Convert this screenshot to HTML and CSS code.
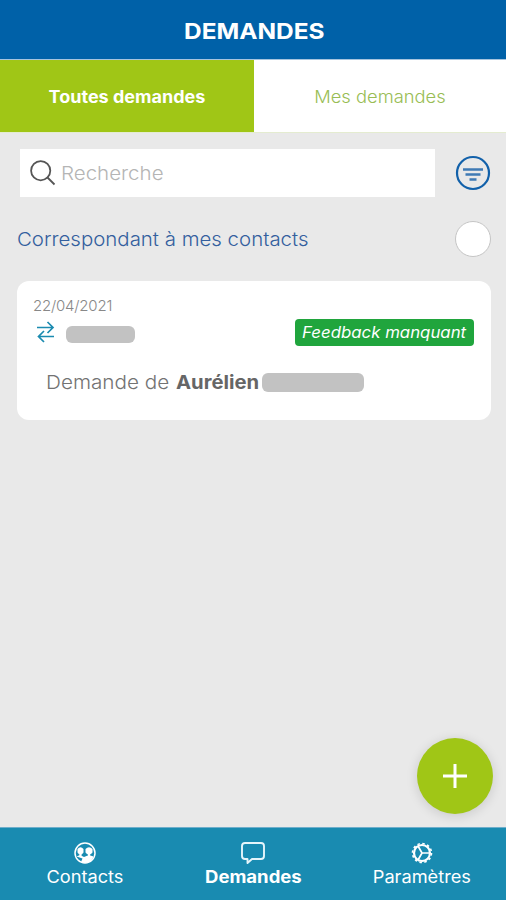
FILE: index.html
```html
<!DOCTYPE html>
<html lang="fr">
<head>
<meta charset="utf-8">
<meta name="viewport" content="width=device-width, initial-scale=1">
<title>Demandes</title>
<link rel="stylesheet" href="styles.css">
</head>
<body>
<div class="app">
  <header class="header"><h1 class="title">DEMANDES</h1></header>
  <nav class="tabs">
    <a class="tab tab-active"><span class="t-all">Toutes demandes</span></a>
    <a class="tab"><span class="t-mine">Mes demandes</span></a>
  </nav>
  <main class="content">
    <div class="search-row">
      <div class="search">
        <svg class="search-icon" width="26" height="26" viewBox="0 0 26 26" fill="none" stroke="#555" stroke-width="1.8"><circle cx="10.700" cy="10.700" r="9.600"/><path d="M17.500 17.500 24.500 24.500"/></svg>
        <span class="placeholder">Recherche</span>
      </div>
      <svg class="filter" width="36" height="36" viewBox="0 0 36 36" fill="none" stroke="#1261aa"><circle cx="18" cy="18" r="16" stroke-width="2.200"/><path d="M8 14.500h20M10.500 19.500h15M14.500 24.500h7" stroke="#3f7ab4" stroke-width="2.500"/></svg>
    </div>
    <div class="match-row">
      <span class="match">Correspondant à mes contacts</span>
      <span class="radio"></span>
    </div>
    <article class="card">
      <div class="date">22/04/2021</div>
      <div class="status-row">
        <svg class="swap" width="18" height="22" viewBox="0 0 18 22" fill="none" stroke="#1b8bb0" stroke-width="1.700"><path d="M0 6.500h16M10.500 1l5.500 5.500-5.500 5.500M17 15.500H1M7 10l-5.500 5.500L7 21"/></svg>
        <span class="mask mask-short"></span>
        <span class="badge"><span class="badge-text">Feedback manquant</span></span>
      </div>
      <div class="request"><span class="req-label">Demande de</span><strong class="req-name">Aurélien</strong><span class="mask mask-long"></span></div>
    </article>
  </main>
  <button class="fab" aria-label="Ajouter"><svg width="24" height="24" viewBox="0 0 24 24" stroke="#fff" stroke-width="3"><path d="M12 0v24M0 12h24"/></svg></button>
  <nav class="bottom">
    <a class="item">
      <svg width="22" height="22" viewBox="0 0 22 22"><circle cx="11" cy="11" r="10" fill="none" stroke="#fff" stroke-width="1.500"/><path d="M2.500 14.500 6 13l4 2 5-2 4.500 1.500Q17.500 20.500 11 21q-3 0-4-1l1.500-3.500Z" fill="#fff"/><path d="M3.500 7Q6.500 3.500 9.500 7v3.500q-3 4.500-6 0ZM11.500 7q3.500-3.500 7 0v3.500q-3.500 4.500-7 0Z" fill="#fff"/><path d="M6.500 12v3M15 12v3" stroke="#fff" stroke-width="2"/></svg>
      <span class="i-contacts">Contacts</span>
    </a>
    <a class="item">
      <svg width="24" height="22" viewBox="0 0 24 22" fill="none" stroke="#e5f5fb" stroke-width="1.900" stroke-linejoin="round"><path d="M4 1h16q3 0 3 3v10q0 3-3 3h-9l-4.500 4v-4H4q-3 0-3-3V4q0-3 3-3Z"/></svg>
      <span class="i-demandes">Demandes</span>
    </a>
    <a class="item">
      <svg width="22" height="22" viewBox="0 0 22 22" fill="none" stroke="#fff"><circle cx="11" cy="11" r="8" stroke-width="2.200"/><circle cx="11" cy="11" r="9.500" stroke-width="1.600" stroke-dasharray="2.500 2.474"/><path d="M11 11h8M11 11 7 4M11 11 7 18" stroke-width="1.700"/></svg>
      <span class="i-params">Paramètres</span>
    </a>
  </nav>
</div>
</body>
</html>
```
FILE: styles.css
```css
* { box-sizing: border-box; }
body { margin: 0; font-family: Inter, "Open Sans", sans-serif; }
.app { position: relative; width: 506px; height: 900px; display: flex; flex-direction: column; background: #e9e9e9; overflow: hidden; }
.app span, .app strong, .title { white-space: nowrap; }
.header { height: 59px; display: flex; align-items: center; justify-content: center; background: #0061a8; padding: 3px 0 0 2px; }
.title { margin: 0; font-size: 22px; line-height: 28px; font-weight: 650; color: #fff; transform: scaleX(1.11); }
.tabs { display: flex; height: 74px; background: #fff; border-top: 1px solid #a6c4de; border-bottom: 1px solid #e4ecd0; }
.tab { flex: 1; display: flex; align-items: center; justify-content: center; font-size: 17px; font-weight: 300; color: #99bd55; padding-top: 2px; }
.tab-active { background: #a0c616; color: #fff; font-weight: 700; flex: 0 0 254px; }
.t-all { transform: scaleX(1.06); }
.t-mine { transform: scaleX(1.08); }
.content { flex: 1; padding: 16px 15px 0 17px; }
.search-row { display: flex; justify-content: space-between; align-items: center; height: 48px; padding-left: 3px; }
.search { width: 415px; height: 48px; background: #fff; display: flex; align-items: center; padding-left: 10px; }
.placeholder { margin-left: 5px; font-size: 19px; font-weight: 300; color: #b5b5b5; transform: scaleX(1.08); transform-origin: left; }
.match-row { display: flex; align-items: center; justify-content: space-between; height: 36px; margin-top: 24px; }
.match { font-size: 19px; font-weight: 300; color: #345f9e; transform: scaleX(1.075); transform-origin: left; }
.radio { width: 36px; height: 36px; border: 1px solid #c5c5c5; border-radius: 50%; background: #fff; }
.card { margin-top: 24px; height: 139px; border-radius: 12px; background: #fff; padding: 15px 17px 0 16px; }
.date { height: 19px; line-height: 19px; font-size: 15px; font-weight: 300; letter-spacing: -0.2px; color: #888; }
.status-row { display: flex; height: 34px; align-items: center; }
.swap { margin-left: 4px; }
.mask { background: #c2c2c2; border-radius: 6px; }
.mask-short { width: 69px; height: 17px; margin: 4px 0 0 11px; }
.badge { display: flex; justify-content: center; margin-left: auto; width: 179px; height: 27px; line-height: 26px; border-radius: 4px; background: #20a53d; color: #fff; font-size: 16px; font-style: italic; }
.badge-text { transform: scaleX(1.05); }
.request { display: flex; align-items: center; height: 24px; margin: 21px 0 0 13px; font-size: 19px; color: #737373; }
.req-label { width: 130px; font-weight: 300; transform: scaleX(1.09); transform-origin: left; }
.req-name { width: 86px; font-weight: 700; color: #666; transform: scaleX(1.065); transform-origin: left; }
.mask-long { width: 102px; height: 19px; }
.fab { position: absolute; right: 13px; bottom: 86px; width: 76px; height: 76px; display: flex; align-items: center; justify-content: center; padding: 0; border: 0; border-radius: 50%; background: #a0c616; box-shadow: 0 2px 12px rgba(0,0,0,.14); }
.bottom { display: grid; grid-template-columns: 1fr 1fr 1fr; height: 73px; background: #198bb1; border-top: 1px solid #6faecb; color: #fff; padding-left: 1px; }
.item { display: flex; flex-direction: column; align-items: center; padding-top: 14px; font-size: 17px; line-height: 24px; }
.item span { margin-top: 1px; transform: scaleX(1.07); }
.item .i-demandes { font-weight: 700; transform: scaleX(1.09); }
```
